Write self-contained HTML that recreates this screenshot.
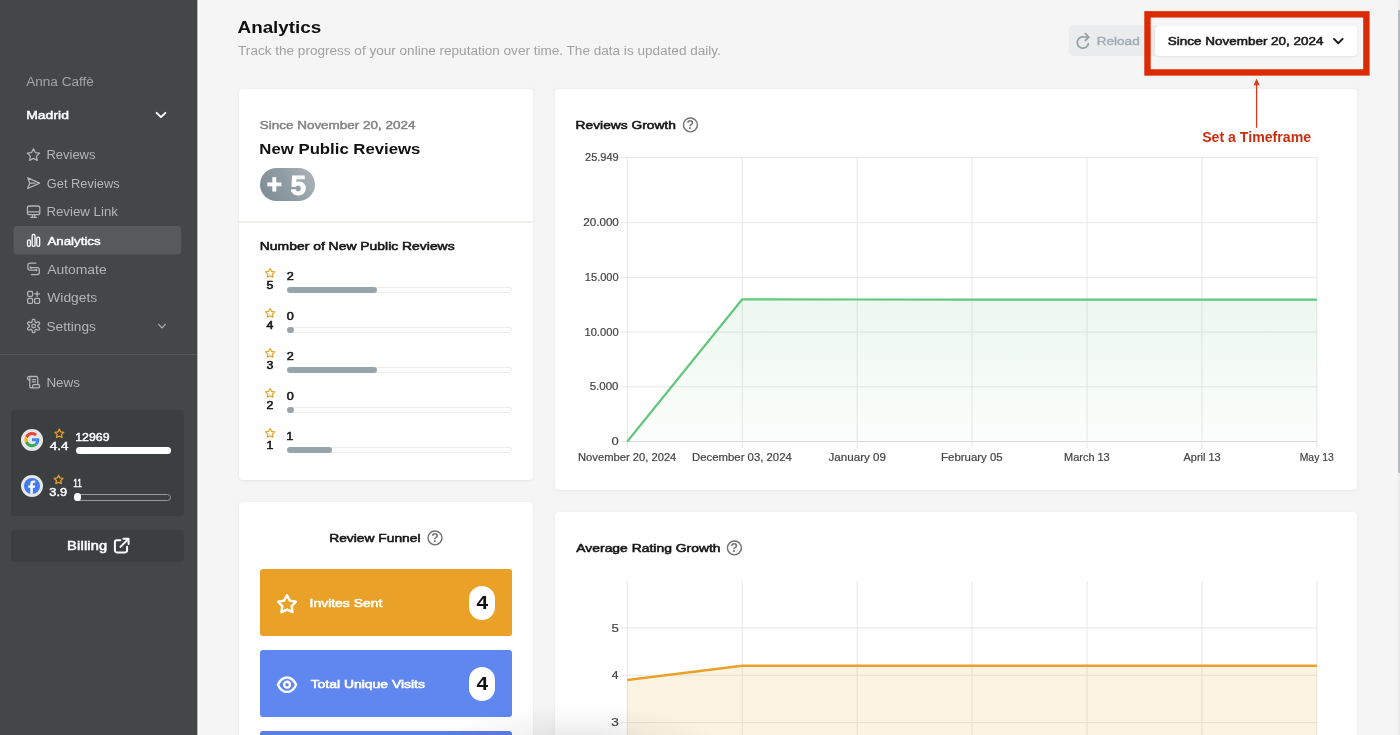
<!DOCTYPE html>
<html lang="en"><head><meta charset="utf-8"><title>Analytics</title>
<style>
html,body{margin:0;padding:0}
body{width:1400px;height:735px;overflow:hidden;position:relative;background:#f5f5f5;font-family:"Liberation Sans",sans-serif;}
.t{position:absolute;white-space:nowrap;margin:0;padding:0}
.b{position:absolute;display:block;box-sizing:border-box}
#root{position:absolute;left:0;top:0;width:1400px;height:735px;overflow:hidden;will-change:transform;}
</style></head><body><div id="root">
<div class="b" style="left:0px;top:0px;width:197px;height:735px;background:#434748;border-radius:0px;"></div>
<div class="b" style="left:197px;top:0px;width:1px;height:735px;background:#b4b6b6;border-radius:0px;"></div>
<div class="b" style="left:198px;top:0px;width:1px;height:735px;background:#fcfcfc;border-radius:0px;"></div>
<div class="t" style="left:26px;top:76px;font-size:12px;line-height:12px;height:12px;color:#a2a5a5;transform:translateX(0.14px) scaleX(1.1322);transform-origin:0 0;">Anna Caffè</div>
<div class="t" style="left:26px;top:110px;font-size:11.5px;line-height:11.5px;height:11.5px;color:#fff;letter-spacing:0.014px;transform:translateX(0.23px) scaleX(1.2118);transform-origin:0 0;-webkit-text-stroke:0.45px #fff;">Madrid</div>
<svg class="b" style="left:155px;top:109px;" width="12" height="12" viewBox="0.0000 0.0000 12.0000 12.0000"><path d="M1.6 3.8 6 8.2 10.4 3.8" fill="none" stroke="#fff" stroke-width="1.9" stroke-linecap="round" stroke-linejoin="round"/></svg>
<svg class="b" style="left:10px;top:222px;" width="176" height="36" viewBox="10.0000 222.0000 176.0000 36.0000"><rect x="13.6" y="226.1" width="167.7" height="28.5" rx="4" fill="#565a5b"/></svg>
<svg class="b" style="left:24px;top:146px" width="19" height="19" viewBox="24 146 19 19"><path d="M33.45 148.70L35.35 152.54L39.58 153.16L36.52 156.15L37.24 160.37L33.45 158.38L29.66 160.37L30.38 156.15L27.32 153.16L31.55 152.54Z" fill="none" stroke="#b3b6b6" stroke-width="1.25" stroke-linejoin="round"/></svg>
<div class="t" style="left:46px;top:149px;font-size:12px;line-height:12px;height:12px;color:#b3b6b6;transform:translateX(0.42px) scaleX(1.0823);transform-origin:0 0;">Reviews</div>
<svg class="b" style="left:26px;top:175px;" width="16" height="16" viewBox="0.0000 -0.9474 25.2632 25.2632"><path fill="none" stroke="#b3b6b6" stroke-width="2" stroke-linecap="round" stroke-linejoin="round" d="M2.8 3.6 21.4 12 2.8 20.4 5.9 12z M5.9 12h8.3"/></svg>
<div class="t" style="left:46px;top:178px;font-size:12px;line-height:12px;height:12px;color:#b3b6b6;transform:translateX(0.81px) scaleX(1.0697);transform-origin:0 0;">Get Reviews</div>
<svg class="b" style="left:26px;top:204px;" width="16" height="16" viewBox="0.0000 -0.1579 25.2632 25.2632"><rect fill="none" stroke="#b3b6b6" stroke-width="2" stroke-linecap="round" stroke-linejoin="round" x="2.2" y="3" width="19.6" height="13.6" rx="3"/><path fill="none" stroke="#b3b6b6" stroke-width="2" stroke-linecap="round" stroke-linejoin="round" d="M2.6 12.4h18.8M7.6 21h8.8M10.2 17v3.8M13.8 17v3.8"/></svg>
<div class="t" style="left:46px;top:206px;font-size:12px;line-height:12px;height:12px;color:#b3b6b6;transform:translateX(0.40px) scaleX(1.1064);transform-origin:0 0;">Review Link</div>
<svg class="b" style="left:26px;top:232px;" width="16" height="16" viewBox="0.0000 -1.1053 25.2632 25.2632"><rect fill="none" stroke="#fff" stroke-width="2" stroke-linecap="round" stroke-linejoin="round" x="2.4" y="11.5" width="4.6" height="10" rx="2.2"/><rect fill="none" stroke="#fff" stroke-width="2" stroke-linecap="round" stroke-linejoin="round" x="9.7" y="2.5" width="4.6" height="19" rx="2.2"/><rect fill="none" stroke="#fff" stroke-width="2" stroke-linecap="round" stroke-linejoin="round" x="17" y="7" width="4.6" height="14.5" rx="2.2"/></svg>
<div class="t" style="left:47px;top:236px;font-size:11.5px;line-height:11.5px;height:11.5px;color:#fff;transform:translateX(0.39px) scaleX(1.1572);transform-origin:0 0;-webkit-text-stroke:0.45px #fff;">Analytics</div>
<svg class="b" style="left:26px;top:261px;" width="16" height="16" viewBox="0.0000 -0.4737 25.2632 25.2632"><path fill="none" stroke="#b3b6b6" stroke-width="2" stroke-linecap="round" stroke-linejoin="round" d="M15.5 3H6.2A3.2 3.2 0 0 0 3 6.2v4.6A3.2 3.2 0 0 0 6.2 14H16"/><path fill="none" stroke="#b3b6b6" stroke-width="2" stroke-linecap="round" stroke-linejoin="round" d="M8.5 21h9.3a3.2 3.2 0 0 0 3.200-3.2v-4.600a3.200 3.200 0 0 0-3.200-3.200H8"/><circle cx="16.500" cy="14" r="1.8" fill="#b3b6b6"/><circle cx="7.5" cy="10" r="1.8" fill="#b3b6b6"/></svg>
<div class="t" style="left:47px;top:264px;font-size:12px;line-height:12px;height:12px;color:#b3b6b6;transform:translateX(0.23px) scaleX(1.1572);transform-origin:0 0;">Automate</div>
<svg class="b" style="left:26px;top:289px;" width="16" height="17" viewBox="0.0000 -1.2632 25.2632 26.8421"><rect fill="none" stroke="#b3b6b6" stroke-width="2" stroke-linecap="round" stroke-linejoin="round" x="2.600" y="2.600" width="7.800" height="7.800" rx="1.800"/><rect fill="none" stroke="#b3b6b6" stroke-width="2" stroke-linecap="round" stroke-linejoin="round" x="2.600" y="13.600" width="7.800" height="7.800" rx="1.800"/><rect fill="none" stroke="#b3b6b6" stroke-width="2" stroke-linecap="round" stroke-linejoin="round" x="13.600" y="13.600" width="7.800" height="7.800" rx="1.800"/><path fill="none" stroke="#b3b6b6" stroke-width="2" stroke-linecap="round" stroke-linejoin="round" d="M17.500 2.800v7.400M13.800 6.500h7.400"/></svg>
<div class="t" style="left:47px;top:292px;font-size:12px;line-height:12px;height:12px;color:#b3b6b6;transform:translateX(0.27px) scaleX(1.1541);transform-origin:0 0;">Widgets</div>
<svg class="b" style="left:26px;top:318px;" width="16" height="16" viewBox="0.0000 -0.6316 25.2632 25.2632"><path fill="none" stroke="#b3b6b6" stroke-width="2" stroke-linecap="round" stroke-linejoin="round" d="M12.00 1.50 L12.92 1.54 L13.76 2.03 L14.23 3.69 L14.42 5.35 L14.83 5.93 L15.35 6.20 L15.84 6.51 L16.55 6.58 L18.08 5.92 L19.75 5.49 L20.60 5.98 L21.09 6.75 L21.52 7.56 L21.51 8.54 L20.31 9.77 L18.97 10.77 L18.67 11.42 L18.70 12.00 L18.67 12.58 L18.97 13.23 L20.31 14.23 L21.51 15.46 L21.52 16.44 L21.09 17.25 L20.60 18.02 L19.75 18.51 L18.08 18.08 L16.55 17.42 L15.84 17.49 L15.35 17.80 L14.83 18.07 L14.42 18.65 L14.23 20.31 L13.76 21.97 L12.92 22.46 L12.00 22.50 L11.08 22.46 L10.24 21.97 L9.77 20.31 L9.58 18.65 L9.17 18.07 L8.65 17.80 L8.16 17.49 L7.45 17.42 L5.92 18.08 L4.25 18.51 L3.40 18.02 L2.91 17.25 L2.48 16.44 L2.49 15.46 L3.69 14.23 L5.03 13.23 L5.33 12.58 L5.30 12.00 L5.33 11.42 L5.03 10.77 L3.69 9.77 L2.49 8.54 L2.48 7.56 L2.91 6.75 L3.40 5.98 L4.25 5.49 L5.92 5.92 L7.45 6.58 L8.16 6.51 L8.65 6.20 L9.17 5.93 L9.58 5.35 L9.77 3.69 L10.24 2.03 L11.08 1.54Z"/><circle fill="none" stroke="#b3b6b6" stroke-width="2" stroke-linecap="round" stroke-linejoin="round" cx="12" cy="12" r="2.9"/></svg>
<div class="t" style="left:46px;top:321px;font-size:12px;line-height:12px;height:12px;color:#b3b6b6;transform:translateX(0.43px) scaleX(1.1415);transform-origin:0 0;">Settings</div>
<svg class="b" style="left:156px;top:320px;" width="12" height="12" viewBox="0.0000 0.0000 12.0000 12.0000"><path d="M2.6 4.400 6 7.800 9.400 4.400" fill="none" stroke="#b3b6b6" stroke-width="1.200" stroke-linecap="round" stroke-linejoin="round"/></svg>
<div class="b" style="left:0px;top:354px;width:197px;height:1px;background:#565a5b;border-radius:0px;"></div>
<svg class="b" style="left:26px;top:374px;" width="16" height="16" viewBox="0.0000 -0.9474 25.2632 25.2632"><path fill="none" stroke="#b3b6b6" stroke-width="2" stroke-linecap="round" stroke-linejoin="round" d="M6 8.5H4.300A1.800 1.800 0 0 1 2.500 6.700V5.300A2.300 2.300 0 0 1 4.800 3h11.400a2.300 2.300 0 0 1 2.300 2.300V15.500"/><path fill="none" stroke="#b3b6b6" stroke-width="2" stroke-linecap="round" stroke-linejoin="round" d="M6 5.300V18.700A2.300 2.300 0 0 0 8.300 21H19.200a2.300 2.300 0 0 0 2.300-2.300V17.800a1.800 1.800 0 0 0-1.800-1.800H12.300a1.800 1.800 0 0 0-1.800 1.800v.9A2.300 2.300 0 0 1 8.200 21"/><path fill="none" stroke="#b3b6b6" stroke-width="2" stroke-linecap="round" stroke-linejoin="round" d="M10 8h5M10 11.500h5"/></svg>
<div class="t" style="left:46px;top:377px;font-size:12px;line-height:12px;height:12px;color:#b3b6b6;transform:translateX(0.38px) scaleX(1.1197);transform-origin:0 0;">News</div>
<div class="b" style="left:11.3px;top:410px;width:172.5px;height:106.2px;background:#3b3f40;border-radius:4px;"></div>
<div class="b" style="left:21px;top:428.6px;width:22px;height:22px;background:#e7e7e7;border-radius:11px;"></div>
<svg class="b" style="left:24px;top:432px;" width="16" height="16" viewBox="-1.2632 0.0000 50.5263 50.5263"><path fill="#EA4335" d="M24 9.500c3.540 0 6.710 1.220 9.210 3.600l6.850-6.850C35.900 2.380 30.470 0 24 0 14.620 0 6.510 5.380 2.560 13.220l7.980 6.190C12.430 13.720 17.740 9.500 24 9.500z"/><path fill="#4285F4" d="M46.980 24.550c0-1.570-.15-3.090-.38-4.550H24v9.020h12.940c-.58 2.960-2.260 5.480-4.780 7.180l7.730 6c4.510-4.180 7.090-10.360 7.090-17.650z"/><path fill="#FBBC05" d="M10.530 28.590c-.48-1.450-.76-2.990-.76-4.590s.27-3.140.76-4.590l-7.980-6.190C.92 16.460 0 20.120 0 24c0 3.880.92 7.540 2.560 10.780l7.970-6.190z"/><path fill="#34A853" d="M24 48c6.480 0 11.930-2.130 15.890-5.810l-7.730-6c-2.150 1.450-4.920 2.300-8.160 2.300-6.260 0-11.570-4.220-13.470-9.910l-7.980 6.190C6.510 42.620 14.620 48 24 48z"/></svg>
<svg class="b" style="left:52px;top:426px" width="15" height="15" viewBox="52 426 15 15"><path d="M59.30 429.15L60.67 431.92L63.72 432.36L61.51 434.52L62.03 437.56L59.30 436.12L56.57 437.56L57.09 434.52L54.88 432.36L57.93 431.92Z" fill="none" stroke="#e9a123" stroke-width="1.25" stroke-linejoin="round"/></svg>
<div class="t" style="left:49px;top:441px;font-size:11.5px;line-height:11.5px;height:11.5px;color:#fff;transform:translateX(0.87px) scaleX(1.1721);transform-origin:0 0;-webkit-text-stroke:0.45px #fff;">4.4</div>
<div class="t" style="left:75px;top:432px;font-size:11.5px;line-height:11.5px;height:11.5px;color:#fff;transform:translateX(0.23px) scaleX(1.0712);transform-origin:0 0;-webkit-text-stroke:0.45px #fff;">12969</div>
<div class="b" style="left:75.5px;top:447px;width:95.3px;height:7.2px;background:#fff;border-radius:4px;"></div>
<div class="b" style="left:21px;top:475px;width:22px;height:22px;background:#e7e7e7;border-radius:11px;"></div>
<div class="b" style="left:24.3px;top:478.3px;width:15.4px;height:15.4px;background:#3f7bf2;border-radius:8px;"></div>
<svg class="b" style="left:24px;top:478px;" width="16" height="16" viewBox="-0.4675 -0.4675 24.9351 24.9351"><path fill="#fff" d="M13.300 24v-9.200h3.100l.600-3.700h-3.700V8.800c0-1.100.500-2 2.100-2H17V3.500c-.300 0-1.500-.200-2.800-.200-2.900 0-4.800 1.700-4.800 4.900v2.900H6.300v3.700h3.100V24z"/></svg>
<svg class="b" style="left:51px;top:472px" width="15" height="15" viewBox="51 472 15 15"><path d="M58.60 475.20L59.97 477.97L63.02 478.41L60.81 480.57L61.33 483.61L58.60 482.18L55.87 483.61L56.39 480.57L54.18 478.41L57.23 477.97Z" fill="none" stroke="#e9a123" stroke-width="1.25" stroke-linejoin="round"/></svg>
<div class="t" style="left:49px;top:487px;font-size:11.5px;line-height:11.5px;height:11.5px;color:#fff;transform:translateX(0.37px) scaleX(1.1056);transform-origin:0 0;-webkit-text-stroke:0.45px #fff;">3.9</div>
<div class="t" style="left:73px;top:478px;font-size:11.5px;line-height:11.5px;height:11.5px;color:#fff;transform:translateX(0.36px) scaleX(0.7200);transform-origin:0 0;-webkit-text-stroke:0.4px #fff;">11</div>
<div class="b" style="left:74px;top:493.7px;width:96.8px;height:7px;background:transparent;border-radius:4px;border:1px solid #999b9b;"></div>
<div class="b" style="left:73.5px;top:493.4px;width:7.6px;height:7.6px;background:#fff;border-radius:4px;"></div>
<div class="b" style="left:11.3px;top:529.7px;width:172.5px;height:32.2px;background:#3b3f40;border-radius:4px;"></div>
<div class="t" style="left:67px;top:540px;font-size:12px;line-height:12px;height:12px;color:#fff;letter-spacing:0.142px;transform:translateX(0.11px) scaleX(1.2200);transform-origin:0 0;-webkit-text-stroke:0.5px #fff;">Billing</div>
<svg class="b" style="left:112px;top:536px;" width="19" height="19" viewBox="-0.9492 -1.2203 25.7627 25.7627"><path fill="none" stroke="#fff" stroke-width="2.700" stroke-linecap="round" stroke-linejoin="round" d="M19.500 13.500v5a2.500 2.500 0 0 1-2.500 2.500H5.500A2.500 2.500 0 0 1 3 18.500V7a2.500 2.500 0 0 1 2.500-2.500h5M14.500 2.500h7v7M21 3 10.500 13.500"/></svg>
<div class="t" style="left:237px;top:20px;font-size:16px;line-height:16px;height:16px;color:#111;font-weight:700;transform:translateX(0.53px) scaleX(1.1773);transform-origin:0 0;">Analytics</div>
<div class="t" style="left:238px;top:45px;font-size:12px;line-height:12px;height:12px;color:#a1a1a1;transform:translateX(0.09px) scaleX(1.1296);transform-origin:0 0;">Track the progress of your online reputation over time. The data is updated daily.</div>
<svg class="b" style="left:1064px;top:20px;" width="100" height="42" viewBox="1064.0000 20.0000 100.0000 42.0000"><rect x="1068.6" y="25.4" width="90" height="30.7" rx="4.5" fill="#ebeced"/></svg>
<svg class="b" style="left:1072px;top:28px;" width="22" height="24" viewBox="1072.0000 28.0000 22.0000 24.0000"><path fill="none" stroke="#93a1a9" stroke-width="1.750" stroke-linecap="round" stroke-linejoin="round" d="M1088.3 43.7A5.600 5.600 0 1 1 1083.500 36.950L1088.500 37.100M1085.300 33.700L1088.800 37.100L1085.300 40.500"/></svg>
<div class="t" style="left:1096px;top:36px;font-size:11.5px;line-height:11.5px;height:11.5px;color:#9fadb4;transform:translateX(0.64px) scaleX(1.1813);transform-origin:0 0;-webkit-text-stroke:0.4px #9fadb4;">Reload</div>
<div class="b" style="left:1155.4px;top:25.7px;width:201.7px;height:30.4px;background:#fff;border-radius:4px;box-shadow:0 1px 2px rgba(0,0,0,.08);"></div>
<div class="t" style="left:1167px;top:36px;font-size:11.5px;line-height:11.5px;height:11.5px;color:#1b1b1b;transform:translateX(0.83px) scaleX(1.1709);transform-origin:0 0;-webkit-text-stroke:0.55px #1b1b1b;">Since November 20, 2024</div>
<svg class="b" style="left:1332px;top:35px;" width="13" height="13" viewBox="-0.3000 -0.2000 13.0000 13.0000"><path d="M1.700 3.700 6 8 10.300 3.700" fill="none" stroke="#1b1b1b" stroke-width="1.950" stroke-linecap="round" stroke-linejoin="round"/></svg>
<div class="b" style="left:1398px;top:0px;width:2px;height:735px;background:#ececec;border-radius:0px;"></div>
<div class="b" style="left:1398px;top:10px;width:3px;height:463px;background:#b3bbc0;border-radius:1px;"></div>
<div class="b" style="left:239px;top:89.3px;width:294.2px;height:390.7px;background:#fff;border-radius:4px;box-shadow:0 1px 3px rgba(0,0,0,.055),0 0 7px rgba(0,0,0,.03),0 0 1px rgba(0,0,0,.05);"></div>
<div class="b" style="left:555px;top:89.3px;width:802px;height:400.7px;background:#fff;border-radius:4px;box-shadow:0 1px 3px rgba(0,0,0,.055),0 0 7px rgba(0,0,0,.03),0 0 1px rgba(0,0,0,.05);"></div>
<div class="b" style="left:239px;top:502px;width:294.2px;height:260px;background:#fff;border-radius:4px;box-shadow:0 1px 3px rgba(0,0,0,.055),0 0 7px rgba(0,0,0,.03),0 0 1px rgba(0,0,0,.05);"></div>
<div class="b" style="left:555px;top:512px;width:802px;height:260px;background:#fff;border-radius:4px;box-shadow:0 1px 3px rgba(0,0,0,.055),0 0 7px rgba(0,0,0,.03),0 0 1px rgba(0,0,0,.05);"></div>
<div class="t" style="left:259px;top:120px;font-size:11.5px;line-height:11.5px;height:11.5px;color:#828282;transform:translateX(0.77px) scaleX(1.1703);transform-origin:0 0;-webkit-text-stroke:0.45px #828282;">Since November 20, 2024</div>
<div class="t" style="left:259px;top:141px;font-size:15px;line-height:15px;height:15px;color:#111;font-weight:700;transform:translateX(0.37px) scaleX(1.1165);transform-origin:0 0;">New Public Reviews</div>
<div class="b" style="left:260px;top:167.8px;width:54.9px;height:33.5px;background:linear-gradient(60deg,#7c8a93 0%,#8f9ca4 50%,#adb7bd 100%);border-radius:17px;"></div>
<div class="t" style="left:266.66px;top:171px;font-size:26px;line-height:26px;height:26px;color:#fff;font-weight:700;-webkit-text-stroke:0.9px #fff;">+</div>
<div class="t" style="left:290.62px;top:172px;font-size:28px;line-height:28px;height:28px;color:#fff;font-weight:700;-webkit-text-stroke:0.9px #fff;">5</div>
<div class="b" style="left:239px;top:221px;width:294.2px;height:1.5px;background:#f1efeb;border-radius:0px;"></div>
<div class="t" style="left:259px;top:241px;font-size:11.5px;line-height:11.5px;height:11.5px;color:#151515;transform:translateX(0.80px) scaleX(1.2096);transform-origin:0 0;-webkit-text-stroke:0.55px #151515;">Number of New Public Reviews</div>
<svg class="b" style="left:263px;top:266px" width="15" height="15" viewBox="263 266 15 15"><path d="M270.05 268.50L271.46 271.36L274.62 271.82L272.33 274.04L272.87 277.18L270.05 275.70L267.23 277.18L267.77 274.04L265.48 271.82L268.64 271.36Z" fill="none" stroke="#e9a123" stroke-width="1.15" stroke-linejoin="round"/></svg>
<div class="t" style="left:266px;top:280px;font-size:11px;line-height:11px;height:11px;color:#151515;transform:translateX(0.53px) scaleX(1.1200);transform-origin:0 0;-webkit-text-stroke:0.55px #151515;">5</div>
<div class="t" style="left:286px;top:271px;font-size:11.5px;line-height:11.5px;height:11.5px;color:#151515;transform:translateX(0.64px) scaleX(1.1000);transform-origin:0 0;-webkit-text-stroke:0.55px #151515;">2</div>
<div class="b" style="left:286.9px;top:286.6px;width:225.2px;height:6.8px;background:#fff;border-radius:4px;border:1px solid #efece7;"></div>
<div class="b" style="left:286.9px;top:286.6px;width:90.08px;height:6.8px;background:#98a4ac;border-radius:4px;"></div>
<svg class="b" style="left:263px;top:306px" width="15" height="15" viewBox="263 306 15 15"><path d="M270.05 308.50L271.46 311.36L274.62 311.82L272.33 314.04L272.87 317.18L270.05 315.70L267.23 317.18L267.77 314.04L265.48 311.82L268.64 311.36Z" fill="none" stroke="#e9a123" stroke-width="1.15" stroke-linejoin="round"/></svg>
<div class="t" style="left:266px;top:320px;font-size:11px;line-height:11px;height:11px;color:#151515;transform:translateX(0.54px) scaleX(1.1200);transform-origin:0 0;-webkit-text-stroke:0.55px #151515;">4</div>
<div class="t" style="left:286px;top:311px;font-size:11.5px;line-height:11.5px;height:11.5px;color:#151515;transform:translateX(0.68px) scaleX(1.1000);transform-origin:0 0;-webkit-text-stroke:0.55px #151515;">0</div>
<div class="b" style="left:286.9px;top:326.6px;width:225.2px;height:6.8px;background:#fff;border-radius:4px;border:1px solid #efece7;"></div>
<div class="b" style="left:286.9px;top:326.6px;width:6.8px;height:6.8px;background:#98a4ac;border-radius:4px;"></div>
<svg class="b" style="left:263px;top:346px" width="15" height="15" viewBox="263 346 15 15"><path d="M270.05 348.50L271.46 351.36L274.62 351.82L272.33 354.04L272.87 357.18L270.05 355.70L267.23 357.18L267.77 354.04L265.48 351.82L268.64 351.36Z" fill="none" stroke="#e9a123" stroke-width="1.15" stroke-linejoin="round"/></svg>
<div class="t" style="left:266px;top:360px;font-size:11px;line-height:11px;height:11px;color:#151515;transform:translateX(0.49px) scaleX(1.1200);transform-origin:0 0;-webkit-text-stroke:0.55px #151515;">3</div>
<div class="t" style="left:286px;top:351px;font-size:11.5px;line-height:11.5px;height:11.5px;color:#151515;transform:translateX(0.64px) scaleX(1.1000);transform-origin:0 0;-webkit-text-stroke:0.55px #151515;">2</div>
<div class="b" style="left:286.9px;top:366.6px;width:225.2px;height:6.8px;background:#fff;border-radius:4px;border:1px solid #efece7;"></div>
<div class="b" style="left:286.9px;top:366.6px;width:90.08px;height:6.8px;background:#98a4ac;border-radius:4px;"></div>
<svg class="b" style="left:263px;top:386px" width="15" height="15" viewBox="263 386 15 15"><path d="M270.05 388.50L271.46 391.36L274.62 391.82L272.33 394.04L272.87 397.18L270.05 395.70L267.23 397.18L267.77 394.04L265.48 391.82L268.64 391.36Z" fill="none" stroke="#e9a123" stroke-width="1.15" stroke-linejoin="round"/></svg>
<div class="t" style="left:266px;top:400px;font-size:11px;line-height:11px;height:11px;color:#151515;transform:translateX(0.58px) scaleX(1.1200);transform-origin:0 0;-webkit-text-stroke:0.55px #151515;">2</div>
<div class="t" style="left:286px;top:391px;font-size:11.5px;line-height:11.5px;height:11.5px;color:#151515;transform:translateX(0.68px) scaleX(1.1000);transform-origin:0 0;-webkit-text-stroke:0.55px #151515;">0</div>
<div class="b" style="left:286.9px;top:406.6px;width:225.2px;height:6.8px;background:#fff;border-radius:4px;border:1px solid #efece7;"></div>
<div class="b" style="left:286.9px;top:406.6px;width:6.8px;height:6.8px;background:#98a4ac;border-radius:4px;"></div>
<svg class="b" style="left:263px;top:426px" width="15" height="15" viewBox="263 426 15 15"><path d="M270.05 428.50L271.46 431.36L274.62 431.82L272.33 434.04L272.87 437.18L270.05 435.70L267.23 437.18L267.77 434.04L265.48 431.82L268.64 431.36Z" fill="none" stroke="#e9a123" stroke-width="1.15" stroke-linejoin="round"/></svg>
<div class="t" style="left:266px;top:440px;font-size:11px;line-height:11px;height:11px;color:#151515;transform:translateX(0.38px) scaleX(1.1200);transform-origin:0 0;-webkit-text-stroke:0.55px #151515;">1</div>
<div class="t" style="left:286px;top:431px;font-size:11.5px;line-height:11.5px;height:11.5px;color:#151515;transform:translateX(0.26px) scaleX(1.1000);transform-origin:0 0;-webkit-text-stroke:0.55px #151515;">1</div>
<div class="b" style="left:286.9px;top:446.6px;width:225.2px;height:6.8px;background:#fff;border-radius:4px;border:1px solid #efece7;"></div>
<div class="b" style="left:286.9px;top:446.6px;width:45.04px;height:6.8px;background:#98a4ac;border-radius:4px;"></div>
<div class="t" style="left:575px;top:120px;font-size:11.5px;line-height:11.5px;height:11.5px;color:#151515;transform:translateX(0.60px) scaleX(1.1976);transform-origin:0 0;-webkit-text-stroke:0.55px #151515;">Reviews Growth</div>
<svg class="b" style="left:681px;top:115px;" width="19" height="19" viewBox="-0.4000 -0.9000 19.0000 19.0000"><circle cx="9" cy="9" r="6.950" fill="none" stroke="#727272" stroke-width="1.450"/><text x="8.950" y="13.600" text-anchor="middle" font-family="Liberation Sans, sans-serif" font-weight="700" font-size="12.200" fill="#727272">?</text></svg>
<svg class="b" style="left:560px;top:150px;" width="790" height="310" viewBox="560.0000 150.0000 790.0000 310.0000"><path d="M620.500 441.55H627.30" stroke="#e7e7e7" stroke-width="1"/><path d="M627.30 441.55H1317.38" stroke="#d6d6d6" stroke-width="1"/><path d="M620.500 386.83H627.30" stroke="#e7e7e7" stroke-width="1"/><path d="M627.30 386.83H1317.38" stroke="#e7e7e7" stroke-width="1"/><path d="M620.500 332.1H627.30" stroke="#e7e7e7" stroke-width="1"/><path d="M627.30 332.1H1317.38" stroke="#e7e7e7" stroke-width="1"/><path d="M620.500 277.38H627.30" stroke="#e7e7e7" stroke-width="1"/><path d="M627.30 277.38H1317.38" stroke="#e7e7e7" stroke-width="1"/><path d="M620.500 222.66H627.30" stroke="#e7e7e7" stroke-width="1"/><path d="M627.30 222.66H1317.38" stroke="#e7e7e7" stroke-width="1"/><path d="M620.500 157.55H627.30" stroke="#e7e7e7" stroke-width="1"/><path d="M627.30 157.55H1317.38" stroke="#e7e7e7" stroke-width="1"/><path d="M627.3 157.500V448.500" stroke="#e7e7e7" stroke-width="1"/><path d="M742.23 157.500V448.500" stroke="#e7e7e7" stroke-width="1"/><path d="M857.16 157.500V448.500" stroke="#e7e7e7" stroke-width="1"/><path d="M972.09 157.500V448.500" stroke="#e7e7e7" stroke-width="1"/><path d="M1087.02 157.500V448.500" stroke="#e7e7e7" stroke-width="1"/><path d="M1201.95 157.500V448.500" stroke="#e7e7e7" stroke-width="1"/><path d="M1316.88 157.500V448.500" stroke="#e7e7e7" stroke-width="1"/><defs><linearGradient id="gg" x1="0" y1="0" x2="0" y2="1"><stop offset="0" stop-color="#5fc47a" stop-opacity=".12"/><stop offset="1" stop-color="#5fc47a" stop-opacity=".02"/></linearGradient></defs><path d="M627.30 441.55L742.23 299.31L857.16 299.51L972.09 299.61L1316.88 299.61V441.55Z" fill="url(#gg)"/><path d="M627.30 441.55L742.23 299.31L857.16 299.51L972.09 299.61L1316.88 299.61" fill="none" stroke="#62c67c" stroke-width="2.200" stroke-linejoin="round"/></svg>
<div class="t" style="left:585px;top:152px;font-size:10.5px;line-height:10.5px;height:10.5px;color:#444;transform:translateX(0.03px) scaleX(1.0450);transform-origin:0 0;-webkit-text-stroke:0.2px #444;">25.949</div>
<div class="t" style="left:583px;top:217px;font-size:10.5px;line-height:10.5px;height:10.5px;color:#444;transform:translateX(0.25px) scaleX(1.1080);transform-origin:0 0;-webkit-text-stroke:0.2px #444;">20.000</div>
<div class="t" style="left:584px;top:272px;font-size:10.5px;line-height:10.5px;height:10.5px;color:#444;transform:translateX(0.87px) scaleX(1.0513);transform-origin:0 0;-webkit-text-stroke:0.2px #444;">15.000</div>
<div class="t" style="left:584px;top:327px;font-size:10.5px;line-height:10.5px;height:10.5px;color:#444;transform:translateX(0.44px) scaleX(1.0645);transform-origin:0 0;-webkit-text-stroke:0.2px #444;">10.000</div>
<div class="t" style="left:589px;top:381px;font-size:10.5px;line-height:10.5px;height:10.5px;color:#444;transform:translateX(0.69px) scaleX(1.0967);transform-origin:0 0;-webkit-text-stroke:0.2px #444;">5.000</div>
<div class="t" style="left:611px;top:436px;font-size:10.5px;line-height:10.5px;height:10.5px;color:#444;transform:translateX(0.47px) scaleX(1.2383);transform-origin:0 0;-webkit-text-stroke:0.2px #444;">0</div>
<div class="t" style="left:577px;top:452px;font-size:10.5px;line-height:10.5px;height:10.5px;color:#444;transform:translateX(1.00px) scaleX(1.0663);transform-origin:0 0;-webkit-text-stroke:0.2px #444;">November 20, 2024</div>
<div class="t" style="left:692px;top:452px;font-size:10.5px;line-height:10.5px;height:10.5px;color:#444;transform:translateX(0.05px) scaleX(1.0812);transform-origin:0 0;-webkit-text-stroke:0.2px #444;">December 03, 2024</div>
<div class="t" style="left:828px;top:452px;font-size:10.5px;line-height:10.5px;height:10.5px;color:#444;transform:translateX(0.53px) scaleX(1.1054);transform-origin:0 0;-webkit-text-stroke:0.2px #444;">January 09</div>
<div class="t" style="left:941px;top:452px;font-size:10.5px;line-height:10.5px;height:10.5px;color:#444;transform:translateX(0.08px) scaleX(1.0881);transform-origin:0 0;-webkit-text-stroke:0.2px #444;">February 05</div>
<div class="t" style="left:1064px;top:452px;font-size:10.5px;line-height:10.5px;height:10.5px;color:#444;transform:translateX(0.07px) scaleX(1.0417);transform-origin:0 0;-webkit-text-stroke:0.2px #444;">March 13</div>
<div class="t" style="left:1183px;top:452px;font-size:10.5px;line-height:10.5px;height:10.5px;color:#444;transform:translateX(0.55px) scaleX(1.0418);transform-origin:0 0;-webkit-text-stroke:0.2px #444;">April 13</div>
<div class="t" style="left:1299px;top:452px;font-size:10.5px;line-height:10.5px;height:10.5px;color:#444;transform:translateX(0.63px) scaleX(0.9939);transform-origin:0 0;-webkit-text-stroke:0.2px #444;">May 13</div>
<div class="t" style="left:329px;top:533px;font-size:11.5px;line-height:11.5px;height:11.5px;color:#151515;transform:translateX(0.20px) scaleX(1.2008);transform-origin:0 0;-webkit-text-stroke:0.55px #151515;">Review Funnel</div>
<svg class="b" style="left:426px;top:528px;" width="18" height="19" viewBox="0.0000 -0.9000 18.0000 19.0000"><circle cx="9" cy="9" r="6.950" fill="none" stroke="#727272" stroke-width="1.450"/><text x="8.950" y="13.600" text-anchor="middle" font-family="Liberation Sans, sans-serif" font-weight="700" font-size="12.200" fill="#727272">?</text></svg>
<div class="b" style="left:260px;top:569px;width:252.1px;height:67px;background:#e9a227;border-radius:3px;"></div>
<svg class="b" style="left:274px;top:591px" width="27" height="27" viewBox="274 591 27 27"><path d="M287.00 595.25L289.91 600.59L295.89 601.71L291.71 606.13L292.50 612.16L287.00 609.56L281.50 612.16L282.29 606.13L278.11 601.71L284.09 600.59Z" fill="none" stroke="#fff" stroke-width="2.4" stroke-linejoin="round"/></svg>
<div class="t" style="left:309px;top:598px;font-size:11.5px;line-height:11.5px;height:11.5px;color:#fff;transform:translateX(0.61px) scaleX(1.2096);transform-origin:0 0;-webkit-text-stroke:0.6px #fff;">Invites Sent</div>
<div class="b" style="left:469.3px;top:585.7px;width:26.1px;height:33.9px;background:#fff;border-radius:13.05px;"></div>
<div class="t" style="left:476px;top:594px;font-size:18px;line-height:18px;height:18px;color:#111;font-weight:700;transform:translateX(0.49px) scaleX(1.1600);transform-origin:0 0;">4</div>
<div class="b" style="left:260px;top:650px;width:252.1px;height:67px;background:#6087ef;border-radius:3px;"></div>
<svg class="b" style="left:276px;top:674px;" width="22" height="22" viewBox="-0.3364 0.0000 24.6729 24.6729"><path fill="none" stroke="#fff" stroke-width="2.600" stroke-linejoin="round" d="M1.800 12C3.800 7.600 7.400 3.900 12 3.900S20.200 7.600 22.200 12C20.200 16.400 16.600 20.100 12 20.100S3.800 16.400 1.800 12z"/><circle cx="12" cy="12" r="3.300" fill="none" stroke="#fff" stroke-width="2.600"/></svg>
<div class="t" style="left:310px;top:679px;font-size:11.5px;line-height:11.5px;height:11.5px;color:#fff;transform:translateX(0.65px) scaleX(1.2107);transform-origin:0 0;-webkit-text-stroke:0.6px #fff;">Total Unique Visits</div>
<div class="b" style="left:469.3px;top:666.7px;width:26.1px;height:33.9px;background:#fff;border-radius:13.05px;"></div>
<div class="t" style="left:476px;top:675px;font-size:18px;line-height:18px;height:18px;color:#111;font-weight:700;transform:translateX(0.49px) scaleX(1.1600);transform-origin:0 0;">4</div>
<div class="b" style="left:260px;top:730.7px;width:252.1px;height:67px;background:#5b7de8;border-radius:3px;"></div>
<div class="t" style="left:576px;top:543px;font-size:11.5px;line-height:11.5px;height:11.5px;color:#151515;transform:translateX(0.32px) scaleX(1.2084);transform-origin:0 0;-webkit-text-stroke:0.55px #151515;">Average Rating Growth</div>
<svg class="b" style="left:725px;top:538px;" width="19" height="19" viewBox="-0.4000 -0.9000 19.0000 19.0000"><circle cx="9" cy="9" r="6.950" fill="none" stroke="#727272" stroke-width="1.450"/><text x="8.950" y="13.600" text-anchor="middle" font-family="Liberation Sans, sans-serif" font-weight="700" font-size="12.200" fill="#727272">?</text></svg>
<svg class="b" style="left:560px;top:575px;" width="790" height="160" viewBox="560.0000 575.0000 790.0000 160.0000"><path d="M620.500 627.9H1317.38" stroke="#e7e7e7" stroke-width="1"/><path d="M620.500 675.25H1317.38" stroke="#e7e7e7" stroke-width="1"/><path d="M620.500 722.6H1317.38" stroke="#e7e7e7" stroke-width="1"/><path d="M627.3 581V735" stroke="#e7e7e7" stroke-width="1"/><path d="M742.23 581V735" stroke="#e7e7e7" stroke-width="1"/><path d="M857.16 581V735" stroke="#e7e7e7" stroke-width="1"/><path d="M972.09 581V735" stroke="#e7e7e7" stroke-width="1"/><path d="M1087.02 581V735" stroke="#e7e7e7" stroke-width="1"/><path d="M1201.95 581V735" stroke="#e7e7e7" stroke-width="1"/><path d="M1316.88 581V735" stroke="#e7e7e7" stroke-width="1"/><path d="M627.30 679.99L742.23 665.78L1316.88 665.78V735H627.30Z" fill="#e9a227" fill-opacity=".13"/><path d="M627.30 679.99L742.23 665.78L1316.88 665.78" fill="none" stroke="#e9a227" stroke-width="2.400" stroke-linejoin="round"/></svg>
<div class="t" style="left:611px;top:623px;font-size:10.5px;line-height:10.5px;height:10.5px;color:#444;transform:translateX(0.38px) scaleX(1.2654);transform-origin:0 0;-webkit-text-stroke:0.2px #444;">5</div>
<div class="t" style="left:611px;top:670px;font-size:10.5px;line-height:10.5px;height:10.5px;color:#444;transform:translateX(0.70px) scaleX(1.1463);transform-origin:0 0;-webkit-text-stroke:0.2px #444;">4</div>
<div class="t" style="left:611px;top:717px;font-size:10.5px;line-height:10.5px;height:10.5px;color:#444;transform:translateX(0.29px) scaleX(1.2966);transform-origin:0 0;-webkit-text-stroke:0.2px #444;">3</div>
<div class="b" style="left:430px;top:695px;width:300px;height:40px;background:radial-gradient(ellipse 140px 36px at 50% 115%, rgba(0,0,0,.10), rgba(0,0,0,.04) 50%, rgba(0,0,0,0) 100%);border-radius:0px;"></div>
<svg class="b" style="left:1140px;top:8px;" width="234" height="72" viewBox="1140.0000 8.0000 234.0000 72.0000"><rect x="1147.5" y="14.35" width="218.9" height="58.1" fill="none" stroke="#dc2a03" stroke-width="6.4"/></svg>
<svg class="b" style="left:1250px;top:77px;" width="14" height="52" viewBox="0.0000 0.0000 14.0000 52.0000"><path d="M6.600 8v42.800" stroke="#d93a1c" stroke-width="1.300" fill="none"/><path d="M6.600 1.600 9.600 8.200H3.600z" fill="#d93a1c"/></svg>
<div class="t" style="left:1202px;top:130px;font-size:14px;line-height:14px;height:14px;color:#cb2d0f;font-weight:700;transform:translateX(0.15px) scaleX(1.0099);transform-origin:0 0;">Set a Timeframe</div>
</div></body></html>
